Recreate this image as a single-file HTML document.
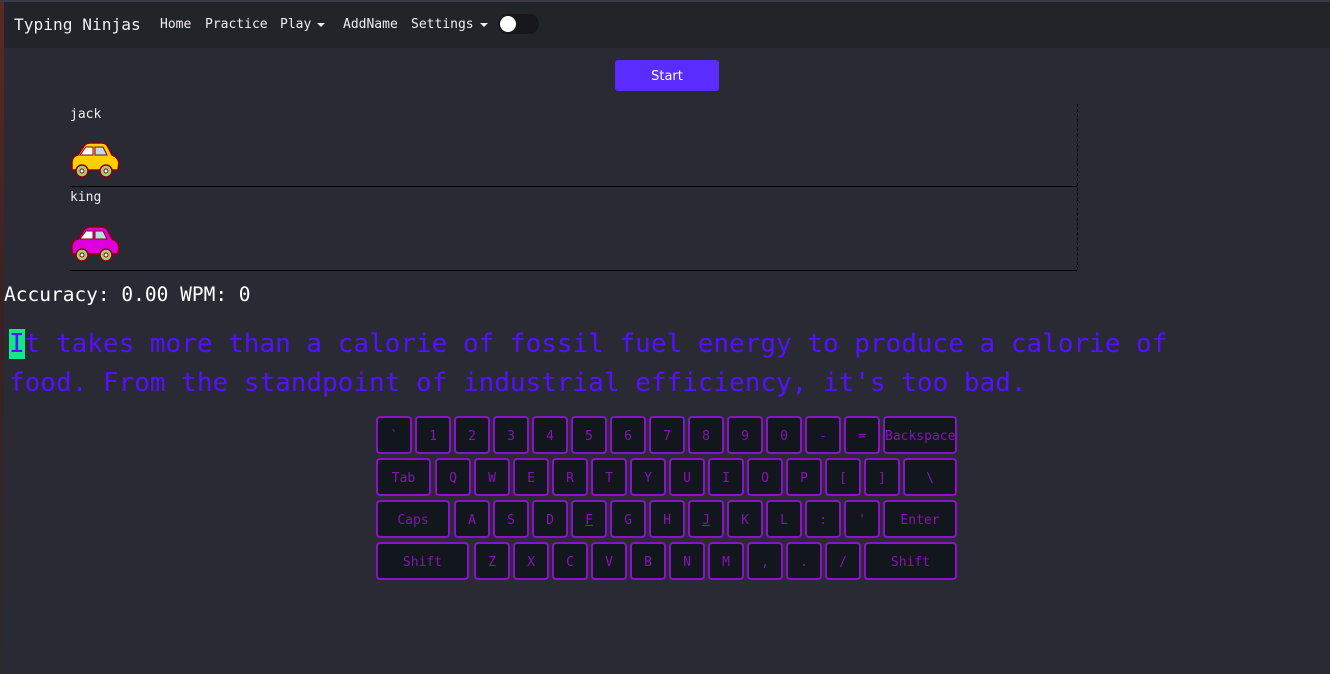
<!DOCTYPE html>
<html><head><meta charset="utf-8"><style>
body{margin:0;width:1330px;height:674px;background:#2a2a35;font-family:"DejaVu Sans Mono","Liberation Mono",monospace;position:relative;overflow:hidden}
.edge{position:absolute;left:0;top:0;width:4px;height:674px;background:linear-gradient(#5a2a22,#3a2220 300px,#2a2a30)}
.nav{position:absolute;left:4px;top:2px;width:1326px;height:46px;background:#212429;color:#fff}
.top{position:absolute;left:0;top:0;width:1330px;height:2px;background:#3a3a48}
.nav span{position:absolute;top:0;line-height:46px;font-size:13px;color:#eee}
.brand{font-size:16.2px!important;left:10px}
.caret{display:inline-block;border-left:4px solid transparent;border-right:4px solid transparent;border-top:4px solid #eee;vertical-align:middle;margin-left:6px}
.tog{position:absolute;left:494px;top:12px;width:41px;height:20px;border-radius:10px;background:#15171a}
.tog:after{content:"";position:absolute;left:2px;top:2px;width:16px;height:16px;border-radius:50%;background:#fff}
.btn{position:absolute;left:615px;top:60px;width:104px;height:31px;background:#5a2cff;border-radius:3px;color:#fff;font-size:13px;text-align:center;line-height:33px;font-family:"DejaVu Sans",sans-serif}
.name{position:absolute;left:70px;font-size:13px;color:#eee}
.hl{position:absolute;left:70px;width:1007px;height:1px;background:#000}
.vl{position:absolute;left:1077px;top:104px;height:166px;border-left:1px dashed #000}
.car{position:absolute;left:70px}
.acc{position:absolute;left:4px;top:283px;font-size:19.5px;color:#fff}
.txt{position:absolute;left:9px;top:325px;font-size:26px;line-height:39px;color:#5511ff;white-space:pre}
.cur{background:#14e68a;color:#5511ff}
.k{position:absolute;box-sizing:border-box;height:38px;border:2px solid #8e10cc;border-radius:4px;background:#12171e;color:#8a10b8;font-size:13px;text-align:center;line-height:37px;width:36px}
</style></head><body>
<div class="edge"></div><div class="top"></div>
<div class="nav">
<span class="brand">Typing Ninjas</span>
<span style="left:156px">Home</span>
<span style="left:201px">Practice</span>
<span style="left:276px">Play<i class="caret"></i></span>
<span style="left:339px">AddName</span>
<span style="left:407px">Settings<i class="caret"></i></span>
<div class="tog"></div>
</div>
<div class="btn">Start</div>
<div class="name" style="top:107px">jack</div>
<svg class="car" style="top:142px" width="50" height="36" viewBox="0 0 50 36"><path d="M2 24 Q1 14 8 13 L14 4 Q16 1 20 1 L32 1 Q36 1 38 5 L42 13 Q48 15 49 21 L48 28 L2 28Z" fill="#ffd000" stroke="#8a0010" stroke-width="1.6"/><path d="M10 13 L16 5 L23 5 L23 13Z" fill="#fff" stroke="#8a0010"/><path d="M25 5 L33 5 L37 13 L25 13Z" fill="#b5e0e0" stroke="#8a0010"/><circle cx="12" cy="29" r="6" fill="#a5d070" stroke="#8a0010" stroke-width="1.5"/><circle cx="12" cy="29" r="2" fill="#fff" stroke="#8a0010"/><circle cx="36" cy="29" r="6" fill="#a5d070" stroke="#8a0010" stroke-width="1.5"/><circle cx="36" cy="29" r="2" fill="#fff" stroke="#8a0010"/></svg>
<div class="hl" style="top:186px"></div>
<div class="name" style="top:190px">king</div>
<svg class="car" style="top:226px" width="50" height="36" viewBox="0 0 50 36"><path d="M2 24 Q1 14 8 13 L14 4 Q16 1 20 1 L32 1 Q36 1 38 5 L42 13 Q48 15 49 21 L48 28 L2 28Z" fill="#dd00dd" stroke="#8a0010" stroke-width="1.6"/><path d="M10 13 L16 5 L23 5 L23 13Z" fill="#fff" stroke="#8a0010"/><path d="M25 5 L33 5 L37 13 L25 13Z" fill="#b5e0e0" stroke="#8a0010"/><circle cx="12" cy="29" r="6" fill="#a5d070" stroke="#8a0010" stroke-width="1.5"/><circle cx="12" cy="29" r="2" fill="#fff" stroke="#8a0010"/><circle cx="36" cy="29" r="6" fill="#a5d070" stroke="#8a0010" stroke-width="1.5"/><circle cx="36" cy="29" r="2" fill="#fff" stroke="#8a0010"/></svg>
<div class="hl" style="top:270px"></div>
<div class="vl"></div>
<div class="acc">Accuracy: 0.00 WPM: 0</div>
<div class="txt"><span class="cur">I</span>t takes more than a calorie of fossil fuel energy to produce a calorie of
food. From the standpoint of industrial efficiency, it's too bad.</div>

<div class="k" style="left:376px;top:416px">`</div>
<div class="k" style="left:415px;top:416px">1</div>
<div class="k" style="left:454px;top:416px">2</div>
<div class="k" style="left:493px;top:416px">3</div>
<div class="k" style="left:532px;top:416px">4</div>
<div class="k" style="left:571px;top:416px">5</div>
<div class="k" style="left:610px;top:416px">6</div>
<div class="k" style="left:649px;top:416px">7</div>
<div class="k" style="left:688px;top:416px">8</div>
<div class="k" style="left:727px;top:416px">9</div>
<div class="k" style="left:766px;top:416px">0</div>
<div class="k" style="left:805px;top:416px">-</div>
<div class="k" style="left:844px;top:416px">=</div>
<div class="k" style="left:883px;top:416px;width:74px">Backspace</div>

<div class="k" style="left:376px;top:458px;width:55px">Tab</div>
<div class="k" style="left:435px;top:458px">Q</div>
<div class="k" style="left:474px;top:458px">W</div>
<div class="k" style="left:513px;top:458px">E</div>
<div class="k" style="left:552px;top:458px">R</div>
<div class="k" style="left:591px;top:458px">T</div>
<div class="k" style="left:630px;top:458px">Y</div>
<div class="k" style="left:669px;top:458px">U</div>
<div class="k" style="left:708px;top:458px">I</div>
<div class="k" style="left:747px;top:458px">O</div>
<div class="k" style="left:786px;top:458px">P</div>
<div class="k" style="left:825px;top:458px">[</div>
<div class="k" style="left:864px;top:458px">]</div>
<div class="k" style="left:903px;top:458px;width:54px">\</div>

<div class="k" style="left:376px;top:500px;width:74px">Caps</div>
<div class="k" style="left:454px;top:500px">A</div>
<div class="k" style="left:493px;top:500px">S</div>
<div class="k" style="left:532px;top:500px">D</div>
<div class="k" style="left:571px;top:500px"><u>F</u></div>
<div class="k" style="left:610px;top:500px">G</div>
<div class="k" style="left:649px;top:500px">H</div>
<div class="k" style="left:688px;top:500px"><u>J</u></div>
<div class="k" style="left:727px;top:500px">K</div>
<div class="k" style="left:766px;top:500px">L</div>
<div class="k" style="left:805px;top:500px">:</div>
<div class="k" style="left:844px;top:500px">'</div>
<div class="k" style="left:883px;top:500px;width:74px">Enter</div>

<div class="k" style="left:376px;top:542px;width:93px">Shift</div>
<div class="k" style="left:474px;top:542px">Z</div>
<div class="k" style="left:513px;top:542px">X</div>
<div class="k" style="left:552px;top:542px">C</div>
<div class="k" style="left:591px;top:542px">V</div>
<div class="k" style="left:630px;top:542px">B</div>
<div class="k" style="left:669px;top:542px">N</div>
<div class="k" style="left:708px;top:542px">M</div>
<div class="k" style="left:747px;top:542px">,</div>
<div class="k" style="left:786px;top:542px">.</div>
<div class="k" style="left:825px;top:542px">/</div>
<div class="k" style="left:864px;top:542px;width:93px">Shift</div>
</body></html>
